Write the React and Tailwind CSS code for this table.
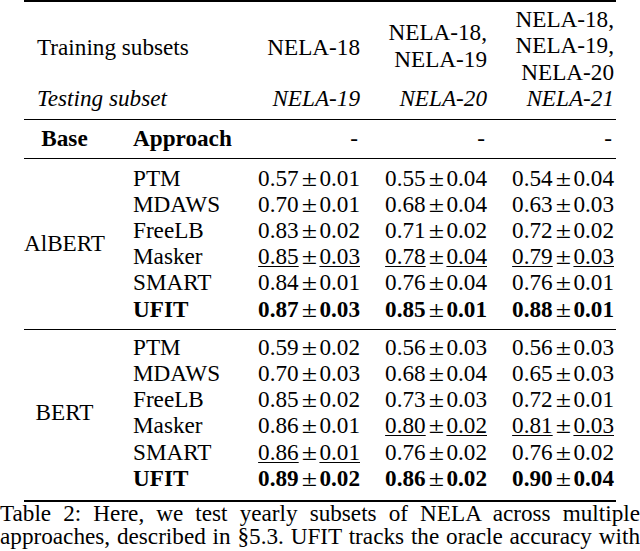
import React from "react";

//#region Data
const groups = [
  {
    base: "AlBERT",
    rows: [
      { name: "PTM", vals: [["0.57", "0.01"], ["0.55", "0.04"], ["0.54", "0.04"]] },
      { name: "MDAWS", vals: [["0.70", "0.01"], ["0.68", "0.04"], ["0.63", "0.03"]] },
      { name: "FreeLB", vals: [["0.83", "0.02"], ["0.71", "0.02"], ["0.72", "0.02"]] },
      { name: "Masker", vals: [["0.85", "0.03", 1], ["0.78", "0.04", 1], ["0.79", "0.03", 1]] },
      { name: "SMART", vals: [["0.84", "0.01"], ["0.76", "0.04"], ["0.76", "0.01"]] },
      { name: "UFIT", bold: true, vals: [["0.87", "0.03"], ["0.85", "0.01"], ["0.88", "0.01"]] },
    ],
  },
  {
    base: "BERT",
    rows: [
      { name: "PTM", vals: [["0.59", "0.02"], ["0.56", "0.03"], ["0.56", "0.03"]] },
      { name: "MDAWS", vals: [["0.70", "0.03"], ["0.68", "0.04"], ["0.65", "0.03"]] },
      { name: "FreeLB", vals: [["0.85", "0.02"], ["0.73", "0.03"], ["0.72", "0.01"]] },
      { name: "Masker", vals: [["0.86", "0.01"], ["0.80", "0.02", 1], ["0.81", "0.03", 1]] },
      { name: "SMART", vals: [["0.86", "0.01", 1], ["0.76", "0.02"], ["0.76", "0.02"]] },
      { name: "UFIT", bold: true, vals: [["0.89", "0.02"], ["0.86", "0.02"], ["0.90", "0.04"]] },
    ],
  },
];
//#endregion

//#region Value cell
const Val = ({ m, s, under, bold }) => (
  <span
    className={`${bold ? "font-bold" : ""} ${
      under ? "underline decoration-1 underline-offset-[2px]" : ""
    }`}
  >
    {m}
    <span className="font-normal inline-block scale-x-[1.2] mx-[4px]">±</span>
    {s}
  </span>
);
//#endregion

//#region Group block
const Group = ({ group, top, bottom }) => (
  <div
    className={`grid grid-cols-[109px_118px_109px_127px_127px] auto-rows-[26.2px] leading-[26.2px] ${top} ${bottom}`}
  >
    <div className="row-span-6 flex items-center justify-center pr-[28px]">
      {group.base}
    </div>
    {group.rows.map((row) => (
      <React.Fragment key={row.name}>
        <div className={row.bold ? "font-bold" : ""}>{row.name}</div>
        {row.vals.map((v, i) => (
          <div key={i} className="text-right whitespace-nowrap">
            <Val m={v[0]} s={v[1]} under={v[2]} bold={row.bold} />
          </div>
        ))}
      </React.Fragment>
    ))}
  </div>
);
//#endregion

//#region App
const App = () => {
  return (
    <div className="w-[640px] h-[551px] overflow-hidden bg-white text-black font-['Liberation_Serif',serif] text-[23.2px]">
      <div className="ml-[24px] w-[592px]">
        {/* Top rule */}
        <div className="h-[2px] bg-black" />

        {/* Header */}
        <div className="pt-[4px] pb-[7px] leading-[26.4px]">
          <div className="grid grid-cols-[227px_109px_127px_127px] items-center">
            <div className="pl-[13px] pt-[4px]">Training subsets</div>
            <div className="text-right pt-[4px]">NELA-18</div>
            <div className="text-right">
              NELA-18,
              <br />
              NELA-19
            </div>
            <div className="text-right">
              NELA-18,
              <br />
              NELA-19,
              <br />
              NELA-20
            </div>
          </div>
          <div className="grid grid-cols-[227px_109px_127px_127px] italic">
            <div className="pl-[13px]">Testing subset</div>
            <div className="text-right">NELA-19</div>
            <div className="text-right">NELA-20</div>
            <div className="text-right">NELA-21</div>
          </div>
        </div>
        <div className="h-[1px] bg-black" />

        {/* Base / Approach */}
        <div className="grid grid-cols-[109px_118px_109px_127px_127px] leading-[26px] pt-[5px] pb-[7px]">
          <div className="font-bold text-center pr-[28px]">Base</div>
          <div className="font-bold">Approach</div>
          <div className="text-right pr-[2px]">-</div>
          <div className="text-right pr-[2px]">-</div>
          <div className="text-right pr-[2px]">-</div>
        </div>
        <div className="h-[1px] bg-black" />

        <Group group={groups[0]} top="pt-[6px]" bottom="pb-[7px]" />
        <div className="h-[1px] bg-black" />
        <Group group={groups[1]} top="pt-[4px]" bottom="pb-[9px]" />
        <div className="h-[2px] bg-black" />
      </div>

      {/* Caption */}
      <div className="leading-[23.5px]">
        <div className="text-justify [text-align-last:justify]">
          Table 2: Here, we test yearly subsets of NELA across multiple
        </div>
        <div className="text-justify [text-align-last:justify]">
          approaches, described in §5.3. UFIT tracks the oracle accuracy with
        </div>
      </div>
    </div>
  );
};

export default App;
//#endregion
